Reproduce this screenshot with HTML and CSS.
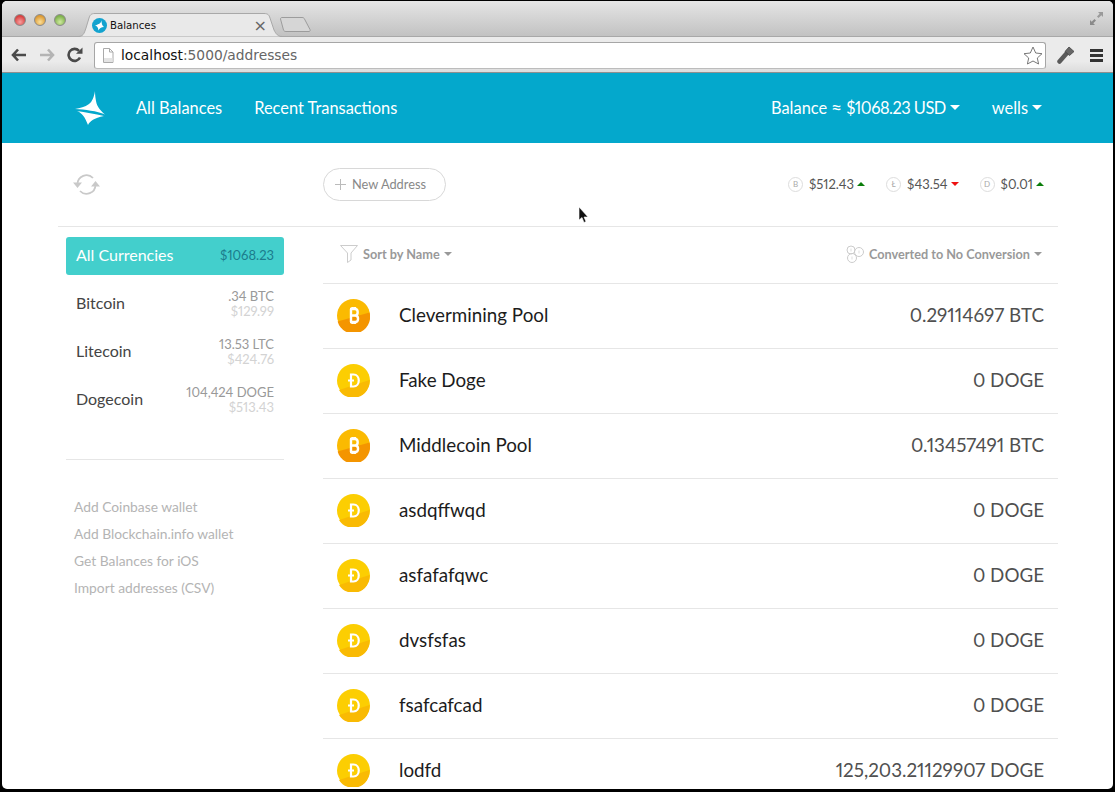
FILE: index.html
```html
<!doctype html>
<html lang="en">
    <head>
        <meta charset="utf-8" />
        <title>Balances</title>
        <link rel="stylesheet" href="styles.css">
    </head>
    <body>
        <div class="window">
            <!-- Browser chrome -->
            <div class="tabstrip">
                <div class="lights">
                    <span class="light red"></span>
                    <span class="light amber"></span>
                    <span class="light green"></span>
                </div>
                <div class="tab">
                    <svg class="tab-shape" width="204" height="24" viewBox="0 0 204 24"><path d="M0 23.500C5 23.500 6 21 8 15L11 5C12 2 13 .5 17 .5H186C190 .5 191 2 192 5L196 17C198 21 200 23.500 204 23.500" fill="#e9e9e9" stroke="#a8a8a8"/></svg>
                    <svg class="favicon" width="15" height="15" viewBox="0 0 15 15"><circle cx="7.500" cy="7.500" r="7.500" fill="#13a3cf"/><path d="M9.500 2C9.300 4.500 8 6 3 7.500C5 8 6.200 9.500 6.500 12.500C7.500 10 9 9.300 12 9C10.500 8 9.500 6 9.500 2Z" fill="#fff"/></svg>
                    <span class="tab-title">Balances</span>
                    <span class="tab-close">×</span>
                </div>
                <svg class="new-tab" width="31" height="15" viewBox="0 0 31 15"><path d="M.5 2C.5 1 1 .5 2 .5H22C23.500 .5 24 1 24.500 2L30 12.500C30.500 13.800 30 14.500 29 14.500H6C4.500 14.500 4 14 3.500 13Z" fill="#d6d6d6" stroke="#9c9c9c"/></svg>
                <svg class="expand" width="15" height="15" viewBox="0 0 15 15"><path d="M9 1H14V6L12.300 4.300L9.500 7L8 5.500L10.700 2.700Z" fill="#9a9a9a"/><path d="M6 14H1V9L2.700 10.700L5.500 8L7 9.500L4.300 12.300Z" fill="#8a8a8a"/></svg>
            </div>
            <div class="toolbar">
                <svg class="tool" width="16" height="14" viewBox="0 0 16 14"><path d="M7 1.500L2 7L7 12.500M2.500 7H15" fill="none" stroke="#4a4a4a" stroke-width="2.600"/></svg>
                <svg class="tool" width="16" height="14" viewBox="0 0 16 14"><path d="M9 1.500L14 7L9 12.500M13.500 7H1" fill="none" stroke="#b4b4b4" stroke-width="2.600"/></svg>
                <svg class="tool" width="16" height="16" viewBox="0 0 16 16"><path d="M13 10.500A6 6 0 1 1 12 3.800" fill="none" stroke="#4a4a4a" stroke-width="2.600"/><path d="M9 6.800H15.500V.5Z" fill="#4a4a4a"/></svg>
                <div class="omnibox">
                    <svg width="12" height="15" viewBox="0 0 12 15"><path d="M1.500 .5H7.500L11 4V14.500H1.500Z" fill="#fff" stroke="#aaa"/><path d="M2 10H10.500V14H2Z" fill="#e4e4e4"/><path d="M7.500 .5V4H11" fill="none" stroke="#aaa"/></svg>
                    <span class="url"><b>localhost</b>:5000/addresses</span>
                    <svg class="star" width="20" height="19" viewBox="0 0 20 19"><path d="M10 1L12.700 7L19 7.700L14.300 12L15.600 18L10 15L4.400 18L5.700 12L1 7.700L7.300 7Z" fill="#fff" stroke="#777"/></svg>
                </div>
                <svg class="wrench" width="18" height="18" viewBox="0 0 18 18"><path d="M2.500 15.500L9.500 7.500" stroke="#5a5a5a" stroke-width="4.500" stroke-linecap="round"/><path d="M8 5.500L12 1L17 5.500L12.500 9.500Z" fill="#666" stroke="#444" stroke-width=".8"/></svg>
                <div class="menu"><span></span><span></span><span></span></div>
            </div>

            <!-- App header -->
            <header class="app-header">
                <svg class="logo" width="30" height="35" viewBox="0 0 30 35"><path d="M20 0C19 6 17 11 14 13C10 16 5 17 0 18C10 18.500 22 20 30 23.500C26 20 22 16 21 10C20.500 7 20 4 20 0Z" fill="#fff"/><path d="M2 20C7 22 10 26 13 34C15 30 19 27 29 25C20 23 10 21 2 20Z" fill="#fff"/></svg>
                <a class="nav-link first">All Balances</a>
                <a class="nav-link second">Recent Transactions</a>
                <a class="nav-link balance">Balance<span class="approx">≈</span><span class="balance-amount">$1068.23 USD</span><i class="caret"></i></a>
                <a class="nav-link user">wells<i class="caret"></i></a>
            </header>

            <div class="container">
                <div class="topbar">
                    <div class="topbar-left">
                        <svg width="27" height="23" viewBox="0 0 27 23"><path d="M4.500 11A9 9 0 0 1 20 5M22.500 12A9 9 0 0 1 7 18" fill="none" stroke="#c9c9c9" stroke-width="1.800"/><path d="M0 9.500H9L4.500 15ZM18 13.500H27L22.500 8Z" fill="#c9c9c9"/></svg>
                    </div>
                    <a class="new-address">
                        <svg width="11" height="11" viewBox="0 0 11 11"><path d="M5.500 0V11M0 5.500H11" stroke="#bbb"/></svg>
                        New Address
                    </a>
                    <div class="tickers">
                        <div class="ticker"><span class="ticker-coin">B</span>$512.43<i class="arrow up"></i></div>
                        <div class="ticker"><span class="ticker-coin">Ł</span>$43.54<i class="arrow down"></i></div>
                        <div class="ticker"><span class="ticker-coin">D</span>$0.01<i class="arrow up"></i></div>
                    </div>
                </div>

                <div class="columns">
                    <aside class="sidebar">
                        <a class="currency active">
                            <span class="currency-name">All Currencies</span>
                            <span class="currency-total">$1068.23</span>
                        </a>
                        <a class="currency">
                            <span class="currency-name">Bitcoin</span>
                            <span class="currency-values"><span>.34 BTC</span><span class="usd">$129.99</span></span>
                        </a>
                        <a class="currency">
                            <span class="currency-name">Litecoin</span>
                            <span class="currency-values"><span>13.53 LTC</span><span class="usd">$424.76</span></span>
                        </a>
                        <a class="currency">
                            <span class="currency-name">Dogecoin</span>
                            <span class="currency-values"><span>104,424 DOGE</span><span class="usd">$513.43</span></span>
                        </a>
                        <div class="side-links">
                            <a>Add Coinbase wallet</a>
                            <a>Add Blockchain.info wallet</a>
                            <a>Get Balances for iOS</a>
                            <a>Import addresses (CSV)</a>
                        </div>
                    </aside>

                    <main class="addresses">
                        <div class="sort-row">
                            <a class="sort">
                                <svg width="18" height="18" viewBox="0 0 18 18"><path d="M.5 .5H17.500L11 8V15L7.500 17.500V8Z" fill="none" stroke="#ccc"/></svg>
                                Sort by Name<i class="caret small"></i>
                            </a>
                            <a class="sort">
                                <svg width="18" height="18" viewBox="0 0 18 18" fill="none" stroke="#ccc"><circle cx="5" cy="5" r="4"/><circle cx="13" cy="7" r="4.500"/><circle cx="6" cy="13" r="4.500"/><path d="M5 3.500V6.500M13 5.500V8.500M6 11.500V14.500" stroke="#ddd"/></svg>
                                Converted to No Conversion<i class="caret small"></i>
                            </a>
                        </div>
                        <div class="address">
                            <svg class="coin" width="33" height="33" viewBox="0 0 33 33"><use href="#btc"/></svg>
                            <span class="address-name">Clevermining Pool</span>
                            <span class="address-amount">0.29114697 BTC</span>
                        </div>
                        <div class="address">
                            <svg class="coin" width="33" height="33" viewBox="0 0 33 33"><use href="#doge"/></svg>
                            <span class="address-name">Fake Doge</span>
                            <span class="address-amount">0 DOGE</span>
                        </div>
                        <div class="address">
                            <svg class="coin" width="33" height="33" viewBox="0 0 33 33"><use href="#btc"/></svg>
                            <span class="address-name">Middlecoin Pool</span>
                            <span class="address-amount">0.13457491 BTC</span>
                        </div>
                        <div class="address">
                            <svg class="coin" width="33" height="33" viewBox="0 0 33 33"><use href="#doge"/></svg>
                            <span class="address-name">asdqffwqd</span>
                            <span class="address-amount">0 DOGE</span>
                        </div>
                        <div class="address">
                            <svg class="coin" width="33" height="33" viewBox="0 0 33 33"><use href="#doge"/></svg>
                            <span class="address-name">asfafafqwc</span>
                            <span class="address-amount">0 DOGE</span>
                        </div>
                        <div class="address">
                            <svg class="coin" width="33" height="33" viewBox="0 0 33 33"><use href="#doge"/></svg>
                            <span class="address-name">dvsfsfas</span>
                            <span class="address-amount">0 DOGE</span>
                        </div>
                        <div class="address">
                            <svg class="coin" width="33" height="33" viewBox="0 0 33 33"><use href="#doge"/></svg>
                            <span class="address-name">fsafcafcad</span>
                            <span class="address-amount">0 DOGE</span>
                        </div>
                        <div class="address">
                            <svg class="coin" width="33" height="33" viewBox="0 0 33 33"><use href="#doge"/></svg>
                            <span class="address-name">lodfd</span>
                            <span class="address-amount">125,203.21129907 DOGE</span>
                        </div>
                    </main>
                </div>
            </div>

            <!-- Mouse pointer -->
            <svg class="pointer" width="12" height="18" viewBox="0 0 12 18"><path d="M1 1V14L4 11.500L6 16.500L8 15.500L6 11H10Z" fill="#111" stroke="#fff" stroke-width=".6"/></svg>
        </div>

        <!-- Coin symbols -->
        <svg class="defs" width="0" height="0">
            <defs>
                <g id="btc">
                    <circle cx="16.500" cy="16.500" r="16.500" fill="#fbba01"/>
                    <path d="M.6 22.500L32.500 13.500A16.500 16.500 0 0 1 .6 22.500Z" fill="#f49500"/>
                    <path d="M13 10H18C21.500 10 21.500 16 18.500 16.500C22 17 22 23 18 23H13M14 10V23M14 16.500H18.500M15.500 8V10M18 8V10M15.500 23V25M18 23V25" fill="none" stroke="#fff" stroke-width="2.400"/>
                </g>
                <g id="doge">
                    <circle cx="16.500" cy="16.500" r="16.500" fill="#fcce02"/>
                    <path d="M2 26L32.500 16A16.500 16.500 0 0 1 2 26Z" fill="#f9ba03"/>
                    <path d="M14 10.500H16.500C23.500 10.500 23.500 22.500 16.500 22.500H14ZM11 16.500H17" fill="none" stroke="#fff" stroke-width="2.200"/>
                </g>
            </defs>
        </svg>
    </body>
</html>
```

FILE: styles.css
```css
* {
    box-sizing: border-box;
}
html, body {
    margin: 0;
    height: 100%;
    overflow: hidden;
    background-color: #000;
}
a {
    color: inherit;
    text-decoration: none;
}
.defs {
    position: absolute;
}
.window {
    position: relative;
    height: 788px;
    margin: 1px 2px 0 2px;
    overflow: hidden;
    background-color: #fff;
    border-radius: 5px;
    font-family: Lato, "Open Sans", sans-serif;
    font-variant-numeric: proportional-nums;
}

/* Browser chrome */
.tabstrip {
    height: 36px;
    display: flex;
    align-items: flex-end;
    padding: 0 0 0 76px;
    position: relative;
    border-bottom: 1px solid #a8a8a8;
    background: linear-gradient(#e6e6e6, #dcdcdc 25%, #c2c2c2);
}
.lights {
    position: absolute;
    left: 12px;
    top: 13px;
    display: flex;
    gap: 8px;
}
.light {
    width: 12px;
    height: 12px;
    border-radius: 50%;
    border: 1px solid #8a8a8a;
}
.red {
    background: radial-gradient(circle at 50% 70%, #f8a0a0, #d8403f 70%);
}
.amber {
    background: radial-gradient(circle at 50% 70%, #fbe09a, #dc9a34 70%);
}
.green {
    background: radial-gradient(circle at 50% 70%, #cfeaa0, #7fb24c 70%);
}
.tab {
    position: relative;
    width: 204px;
    height: 24px;
    margin-bottom: -1px;
    display: flex;
    align-items: center;
    padding-left: 14px;
    font-family: "DejaVu Sans", sans-serif;
    font-size: 10.200px;
    color: #111;
}
.tab-shape {
    position: absolute;
    left: 0;
    top: 0;
}
.favicon, .tab-title, .tab-close {
    position: relative;
}
.tab-title {
    margin-left: 3px;
}
.tab-close {
    margin-left: auto;
    margin-right: 15px;
    font-size: 16px;
    color: #666;
}
.new-tab {
    margin: 0 0 4px -2px;
}
.expand {
    position: absolute;
    right: 9px;
    top: 10px;
}
.toolbar {
    height: 36px;
    display: flex;
    align-items: center;
    padding: 2px 0 1px 9px;
    border-bottom: 1px solid #8f8f8f;
    background: linear-gradient(#ebebeb 70%, #dcdcdc);
}
.tool {
    margin-right: 12px;
}
.omnibox {
    width: 952px;
    height: 27px;
    margin-left: -1px;
    display: flex;
    align-items: center;
    gap: 7px;
    padding: 0 2px 0 7px;
    background-color: #fff;
    border: 1px solid #a6a6a6;
    border-bottom-color: #bcbcbc;
    border-radius: 3px;
}
.url {
    font-family: "DejaVu Sans", sans-serif;
    font-size: 13.800px;
    color: #666;
}
.url b {
    font-weight: normal;
    color: #111;
}
.star {
    margin-left: auto;
}
.wrench {
    margin-left: 11px;
}
.menu {
    margin-left: 15px;
    display: flex;
    flex-direction: column;
    gap: 2px;
}
.menu span {
    display: block;
    width: 13px;
    height: 3px;
    background-color: #333;
}

/* App header */
.app-header {
    height: 70px;
    display: flex;
    align-items: center;
    padding-left: 73px;
    background-color: #04a8cc;
    color: #fff;
    font-size: 16.400px;
}
.nav-link {
    display: flex;
    align-items: center;
    white-space: nowrap;
    margin-bottom: 2px;
}
.approx {
    font-size: 19px;
    line-height: 1;
    margin: 0 4px;
}
.balance-amount {
    letter-spacing: -.5px;
}
.nav-link.first {
    margin-left: 31px;
}
.nav-link.second {
    margin-left: 32px;
}
.nav-link.balance {
    margin-left: auto;
}
.nav-link.user {
    margin-left: 32px;
    margin-right: 71px;
}
.caret {
    display: inline-block;
    margin-left: 4px;
    border-top: 5px solid currentColor;
    border-left: 5px solid transparent;
    border-right: 5px solid transparent;
}
.caret.small {
    border-top-width: 4px;
    border-left-width: 4px;
    border-right-width: 4px;
}

/* Page content */
.container {
    width: 1000px;
    margin-left: 56px;
}
.topbar {
    height: 84px;
    display: flex;
    align-items: center;
    border-bottom: 1px solid #e6e6e6;
    padding-bottom: 1px;
}
.topbar-left {
    width: 265px;
    padding-left: 15px;
    display: flex;
}
.new-address {
    height: 33px;
    width: 123px;
    display: flex;
    align-items: center;
    gap: 6px;
    padding-left: 11px;
    border: 1px solid #d8d8d8;
    border-radius: 17px;
    font-size: 12.800px;
    color: #888;
}
.tickers {
    margin-left: auto;
    margin-right: 14px;
    display: flex;
    gap: 21px;
}
.ticker {
    display: flex;
    align-items: center;
    font-size: 13px;
    color: #555;
}
.ticker-coin {
    width: 15px;
    height: 15px;
    margin-right: 6px;
    display: flex;
    align-items: center;
    justify-content: center;
    border: 1px solid #ddd;
    border-radius: 50%;
    font-size: 8px;
    color: #aaa;
}
.arrow {
    margin-left: 3px;
    border-left: 4px solid transparent;
    border-right: 4px solid transparent;
}
.arrow.up {
    border-bottom: 4px solid #0a7d0a;
}
.arrow.down {
    border-top: 4px solid #ee1111;
}
.columns {
    display: flex;
    align-items: flex-start;
}

/* Sidebar */
.sidebar {
    width: 218px;
    margin: 10px 0 0 8px;
    display: flex;
    flex-direction: column;
    gap: 10px;
}
.currency {
    height: 38px;
    display: flex;
    align-items: center;
    justify-content: space-between;
    padding: 0 10px;
    border-radius: 3px;
    color: #444;
}
.currency-name {
    font-size: 16px;
    margin-bottom: 3px;
}
.currency-total {
    font-size: 13px;
    margin-bottom: 2px;
}
.currency.active {
    background-color: #43cfcc;
    color: #fff;
}
.currency.active .currency-total {
    color: #1c7c8c;
}
.currency-values {
    display: flex;
    flex-direction: column;
    align-items: flex-end;
    font-size: 13px;
    line-height: 15px;
    color: #999;
}
.usd {
    color: #d3d3d3;
}
.side-links {
    margin-top: 30px;
    padding: 38px 8px 0;
    border-top: 1px solid #e6e6e6;
    display: flex;
    flex-direction: column;
    gap: 9px;
    font-size: 13.800px;
    line-height: 18px;
    color: #b4b4b4;
}

/* Address list */
.addresses {
    width: 735px;
    margin-left: 39px;
}
.sort-row {
    height: 57px;
    display: flex;
    align-items: center;
    justify-content: space-between;
    padding: 0 16px 2px 17px;
    border-bottom: 1px solid #e6e6e6;
}
.sort {
    display: flex;
    align-items: center;
    font-size: 12.700px;
    font-weight: bold;
    color: #999;
}
.sort svg {
    margin-right: 5px;
}
.address {
    height: 65px;
    display: flex;
    align-items: center;
    padding: 0 14px 1px;
    border-bottom: 1px solid #e6e6e6;
}
.coin {
    flex: none;
}
.address-name {
    margin: 0 0 2px 29px;
    font-size: 18.800px;
    color: #1c1c1c;
}
.address-amount {
    margin: 0 0 2px auto;
    font-size: 18.800px;
    color: #505050;
}
.pointer {
    position: absolute;
    left: 576px;
    top: 205px;
}
```
